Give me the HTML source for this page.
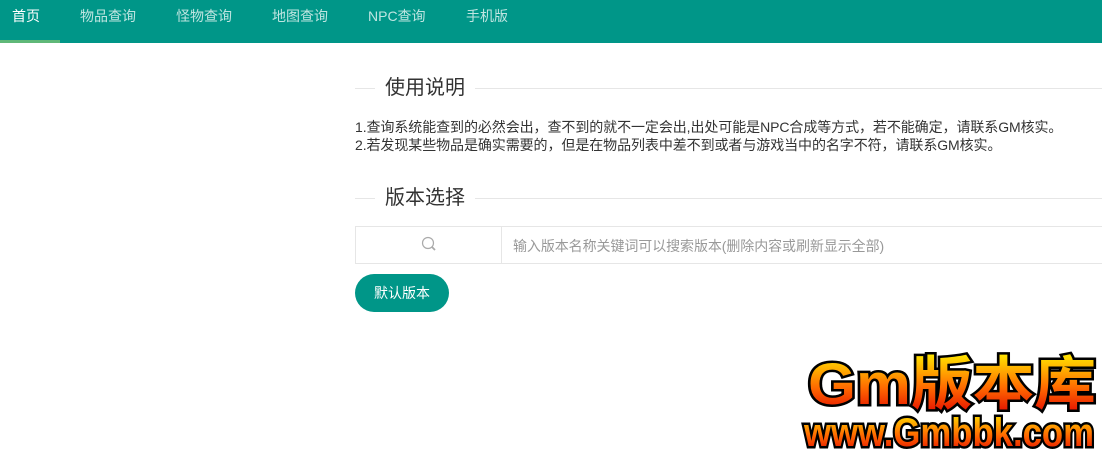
<!DOCTYPE html>
<html><head><meta charset="utf-8"><style>
*{margin:0;padding:0;box-sizing:border-box}
body{width:1102px;height:462px;background:#fff;font-family:"Liberation Sans","Noto Sans CJK SC",sans-serif;position:relative;overflow:hidden;color:#333}
.nav{position:absolute;left:0;top:0;width:1102px;height:43px;background:#009688}
.nav span{position:absolute;top:6px;font-size:14px;color:rgba(255,255,255,.75)}
.nav .act{color:#fff}
.bar{position:absolute;left:0;top:40px;width:60px;height:3px;background:#5FB878}
.leg{position:absolute;left:355px;width:747px;height:1px;background:#e6e6e6}
.lt{position:absolute;left:375px;padding:0 10px;background:#fff;font-size:20px;color:#333;line-height:24px}
.p{position:absolute;left:355px;font-size:14px;line-height:18px;color:#333;white-space:nowrap;letter-spacing:-0.08px}
.box{position:absolute;left:355px;top:226px;width:750px;height:38px;border:1px solid #e6e6e6}
.ic{position:absolute;left:0;top:0;width:146px;height:36px;border-right:1px solid #e6e6e6}
.ph{position:absolute;left:157px;top:9px;font-size:14px;color:#999;letter-spacing:-0.08px}
.btn{position:absolute;left:355px;top:274px;width:94px;height:38px;border-radius:19px;background:#009688;color:#fff;font-size:14px;text-align:center;line-height:38px}
</style></head><body>
<div class="nav">
<span class="act" style="left:12px">首页</span>
<span style="left:80px">物品查询</span>
<span style="left:176px">怪物查询</span>
<span style="left:272px">地图查询</span>
<span style="left:368px">NPC查询</span>
<span style="left:466px">手机版</span>
<div class="bar"></div>
</div>
<div class="leg" style="top:88px"></div>
<div class="lt" style="top:76px">使用说明</div>
<div class="p" style="top:118px">1.查询系统能查到的必然会出，查不到的就不一定会出,出处可能是NPC合成等方式，若不能确定，请联系GM核实。</div>
<div class="p" style="top:136px">2.若发现某些物品是确实需要的，但是在物品列表中差不到或者与游戏当中的名字不符，请联系GM核实。</div>
<div class="leg" style="top:198px"></div>
<div class="lt" style="top:186px">版本选择</div>
<div class="box"><div class="ic">
<svg style="position:absolute;left:65px;top:9px" width="18" height="18" viewBox="0 0 18 18"><circle cx="7" cy="7" r="5.5" fill="none" stroke="#aaa" stroke-width="1.2"/><path d="M11 11 L14 14" stroke="#aaa" stroke-width="1.8"/></svg>
</div><div class="ph">输入版本名称关键词可以搜索版本(删除内容或刷新显示全部)</div></div>
<div class="btn">默认版本</div>
<svg style="position:absolute;left:790px;top:340px" width="312" height="122">
<defs><linearGradient id="g" x1="0" y1="0" x2="0" y2="1"><stop offset="0" stop-color="#ffee00"/><stop offset=".55" stop-color="#ff6a00"/><stop offset="1" stop-color="#e00000"/></linearGradient></defs>
<g font-family="Liberation Sans,Noto Sans CJK SC,sans-serif" font-weight="bold" stroke="#000" stroke-width="5" paint-order="stroke" fill="url(#g)">
<text x="18" y="64" font-size="58" textLength="288" lengthAdjust="spacingAndGlyphs">Gm版本库</text>
<text x="14" y="106" font-size="40" textLength="290" lengthAdjust="spacingAndGlyphs">www.Gmbbk.com</text>
</g></svg>
</body></html>
